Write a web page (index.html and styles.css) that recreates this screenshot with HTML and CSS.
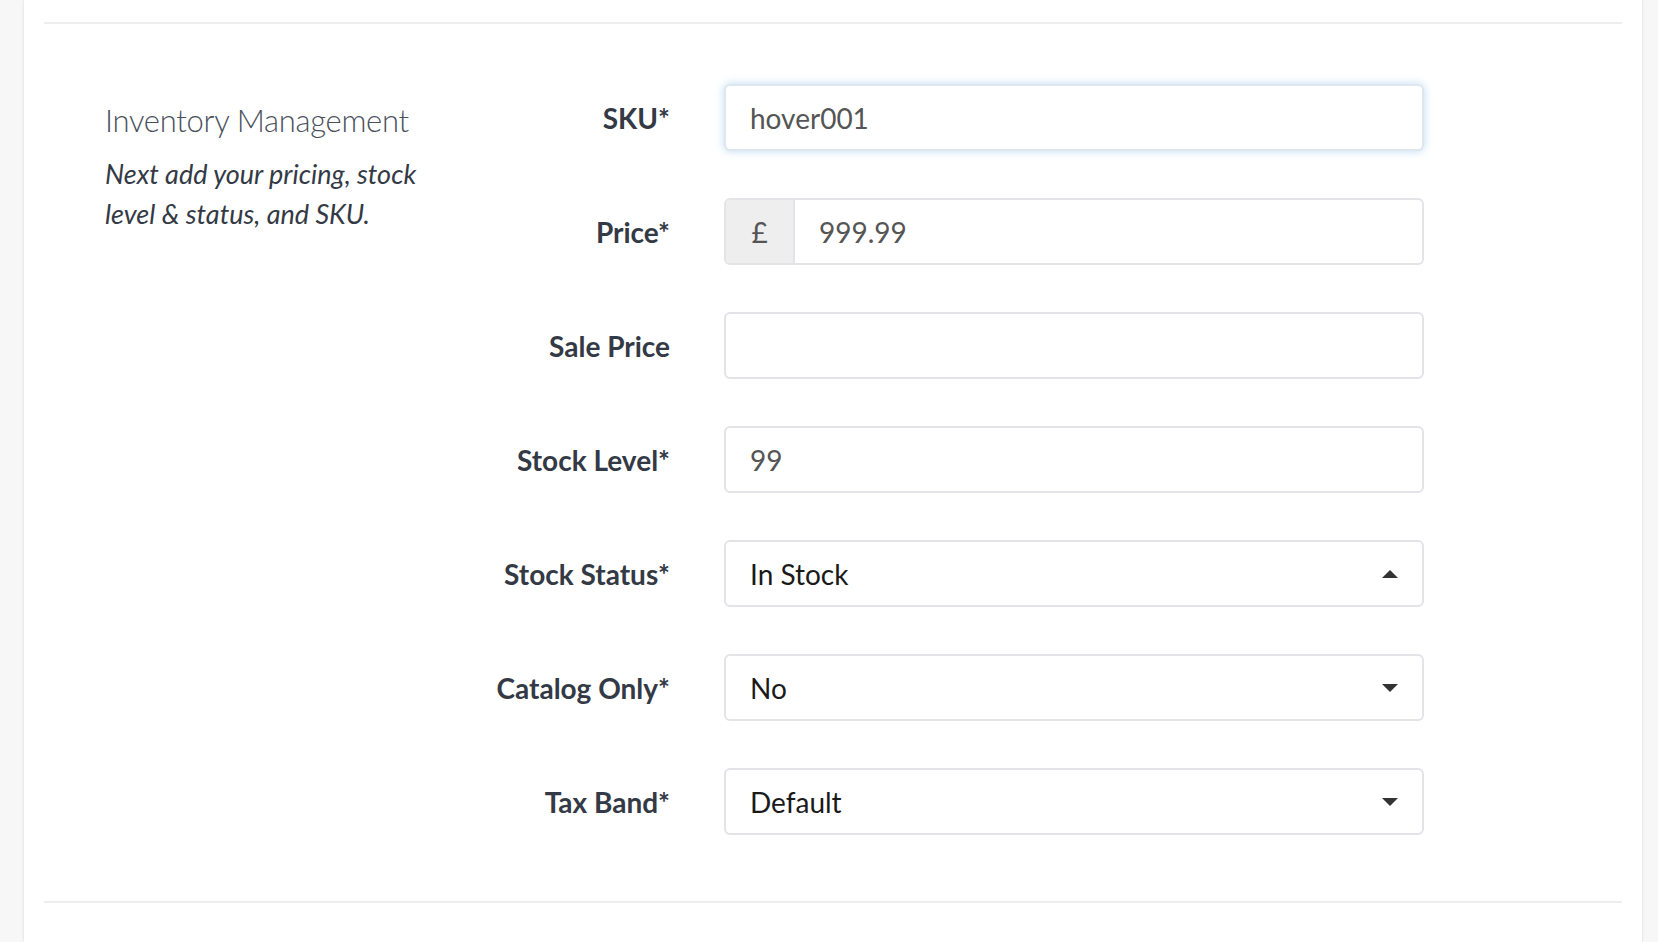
FILE: index.html
```html
<!DOCTYPE html>
<html lang="en">
<head>
<meta charset="utf-8">
<title>Inventory Management</title>
<link rel="stylesheet" href="styles.css">
</head>
<body>
<div class="panel">
  <hr class="rule">
  <section class="section">
    <div class="intro">
      <h2 class="intro-title">Inventory Management</h2>
      <p class="intro-text">Next add your pricing, stock level &amp; status, and SKU.</p>
    </div>
    <form class="form">
      <label class="label" for="sku">SKU*</label>
      <input class="field field-focus" id="sku" type="text" value="hover001">

      <label class="label" for="price">Price*</label>
      <div class="field group">
        <span class="addon">£</span>
        <input class="group-input" id="price" type="text" value="999.99">
      </div>

      <label class="label" for="sale">Sale Price</label>
      <input class="field" id="sale" type="text" value="">

      <label class="label" for="stock">Stock Level*</label>
      <input class="field" id="stock" type="text" value="99">

      <label class="label" for="status">Stock Status*</label>
      <div class="field select">
        <span class="select-value">In Stock</span>
        <svg class="caret" width="16" height="8" viewBox="0 0 16 8"><path d="M0 8 L8 0 L16 8 Z" fill="#333"/></svg>
      </div>

      <label class="label" for="catalog">Catalog Only*</label>
      <div class="field select">
        <span class="select-value">No</span>
        <svg class="caret" width="16" height="8" viewBox="0 0 16 8"><path d="M0 0 L16 0 L8 8 Z" fill="#333"/></svg>
      </div>

      <label class="label" for="tax">Tax Band*</label>
      <div class="field select">
        <span class="select-value">Default</span>
        <svg class="caret" width="16" height="8" viewBox="0 0 16 8"><path d="M0 0 L16 0 L8 8 Z" fill="#333"/></svg>
      </div>
    </form>
  </section>
  <hr class="rule">
</div>
</body>
</html>
```

FILE: styles.css
```css
html, body {
  margin: 0;
  padding: 0;
}

body {
  background: #f7f7f7;
  font-family: Lato, "Open Sans", sans-serif;
  color: #333a45;
  height: 942px;
  overflow: hidden;
}

.panel {
  margin: 0 16px 0 24px;
  background: #fff;
  min-height: 942px;
  padding: 22px 20px 0 20px;
  box-sizing: border-box;
  box-shadow: 0 0 3px rgba(0, 0, 0, 0.12);
}

.rule {
  margin: 0;
  border: 0;
  border-top: 2px solid #eeeeee;
  height: 0;
}

.section {
  display: flex;
  padding: 60px 0 66px 0;
}

.intro {
  width: 340px;
  padding-left: 61px;
  flex-shrink: 0;
}

.intro-title {
  margin: 18px 0 0 0;
  font-family: "Lato Light", "Lato Hairline", Lato, sans-serif;
  font-size: 31px;
  font-weight: 300;
  line-height: 36px;
  color: #4a505c;
  letter-spacing: -0.3px;
}

.intro-text {
  margin: 16px 0 0 0;
  font-size: 27px;
  font-style: italic;
  line-height: 40px;
  color: #333a45;
}

.form {
  flex: 1;
  display: grid;
  grid-template-columns: 1fr 700px;
  column-gap: 54px;
  row-gap: 47px;
  margin-right: 198px;
  align-items: center;
}

.label {
  text-align: right;
  font-size: 28px;
  font-weight: 700;
  color: #333a45;
}

.field {
  box-sizing: border-box;
  height: 67px;
  width: 100%;
  border: 2px solid #e3e3e8;
  border-radius: 6px;
  background: #fff;
  font-family: Lato, "Open Sans", sans-serif;
  font-size: 28px;
  color: #555;
  padding: 0 24px;
  outline: none;
}

.field-focus {
  border-color: #e0e6ee;
  box-shadow: 0 0 8px rgba(102, 175, 233, 0.45);
}

.group {
  display: flex;
  padding: 0;
  overflow: hidden;
}

.addon {
  width: 67px;
  background: #eeeeee;
  border-right: 2px solid #e3e3e8;
  display: flex;
  align-items: center;
  justify-content: center;
  font-size: 28px;
  color: #555;
  flex-shrink: 0;
}

.group-input {
  flex: 1;
  border: 0;
  outline: none;
  font-family: Lato, "Open Sans", sans-serif;
  font-size: 28px;
  color: #555;
  padding: 0 24px;
  background: transparent;
  min-width: 0;
}

.select {
  display: flex;
  align-items: center;
  justify-content: space-between;
  color: #1a1a1a;
  padding-right: 24px;
}

.caret {
  display: block;
}
```
